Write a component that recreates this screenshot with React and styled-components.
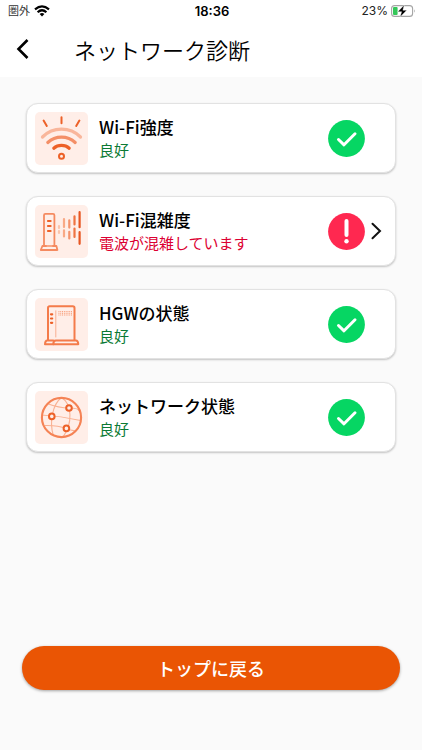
import React from "react";
import styled, { createGlobalStyle } from "styled-components";

const GlobalStyle = createGlobalStyle`
  * {
    box-sizing: border-box;
  }
  body {
    margin: 0;
    background-color: #fafafa;
    color: #000;
    font-family: "Noto Sans CJK JP", sans-serif;
  }
  h1, h2, p, ul {
    margin: 0;
    padding: 0;
  }
  svg {
    display: block;
  }
`;

const Screen = styled.div`
  display: flex;
  flex-direction: column;
  min-height: 100vh;
`;

const TopArea = styled.header`
  background-color: #fff;
`;

const StatusBar = styled.div`
  display: grid;
  grid-template-columns: 1fr auto 1fr;
  align-items: center;
  height: 22px;
  padding: 0 6px 0 8px;
  font-family: Inter, "Noto Sans CJK JP", sans-serif;
  font-size: 12px;
  line-height: 22px;
  .carrier {
    display: flex;
    align-items: center;
    gap: 4px;
    font-size: 11px;
    color: #333;
  }
  .clock {
    font-size: 13px;
    font-weight: 600;
  }
  .battery {
    display: flex;
    align-items: center;
    justify-content: flex-end;
    gap: 3px;
    color: #222;
  }
`;

const TitleBar = styled.div`
  display: flex;
  align-items: center;
  gap: 30px;
  height: 55px;
  padding: 0 0 2px 2px;
  h1 {
    font-size: 22px;
    font-weight: 350;
    line-height: 32px;
  }
`;

const BackButton = styled.button`
  display: flex;
  align-items: center;
  justify-content: center;
  width: 42px;
  height: 42px;
  padding: 0;
  border: none;
  background: none;
  cursor: pointer;
`;

const Content = styled.main`
  flex: 1;
  display: flex;
  flex-direction: column;
  justify-content: space-between;
  gap: 40px;
  padding: 26px 22px 60px;
`;

const CardList = styled.ul`
  display: flex;
  flex-direction: column;
  gap: 23px;
  padding: 0 4px;
  list-style: none;
`;

const Card = styled.li`
  display: flex;
  align-items: center;
  gap: 11px;
  min-height: 70px;
  padding: 0 12px 0 8px;
  border: 1px solid #e2e2e2;
  border-radius: 12px;
  background-color: #fff;
  box-shadow: 0 1px 2px rgba(0, 0, 0, 0.22);
`;

const IconTile = styled.div`
  flex-shrink: 0;
  width: 53px;
  height: 53px;
  border-radius: 5px;
  background-color: #ffeee8;
`;

const CardText = styled.div`
  flex: 1;
  h2 {
    font-size: 17px;
    font-weight: 500;
    line-height: 24px;
  }
  p {
    font-size: 15px;
    line-height: 22px;
    color: ${(props) => (props.$warning ? "#dc0032" : "#0b7a35")};
  }
`;

const CardStatus = styled.div`
  display: flex;
  align-items: center;
  gap: 6px;
  width: 55px;
`;

const DetailButton = styled.button`
  padding: 0;
  border: none;
  background: none;
  cursor: pointer;
`;

const TopButton = styled.button`
  width: 100%;
  height: 44px;
  border: none;
  border-radius: 22px;
  background-color: #ea5504;
  box-shadow: 0 1px 3px rgba(0, 0, 0, 0.35);
  color: #fff;
  font-family: inherit;
  font-size: 18px;
  font-weight: 500;
  line-height: 24px;
  cursor: pointer;
`;

const SignalIcon = () => (
  <svg width="16" height="12" viewBox="0 0 16 12" fill="none" stroke="#000" strokeWidth="2.2">
    <path d="M1 4.3Q8 -1.7 15 4.3" />
    <path d="M3.6 7.2Q8 3.3 12.4 7.2" />
    <path d="M8 11.5L5.6 9Q8 7.1 10.4 9Z" fill="#000" stroke="none" />
  </svg>
);

const BatteryIcon = () => (
  <svg width="25" height="12" viewBox="0 0 25 12" fill="none">
    <rect x="0.6" y="0.6" width="21" height="10.8" rx="3" stroke="#a5a5a5" strokeWidth="1.1" />
    <path d="M23.2 4.2Q24.8 6 23.2 7.8Z" fill="#a5a5a5" />
    <rect x="2" y="2" width="4.6" height="8" rx="1" fill="#34c759" />
    <path d="M13.2 0L6.8 6.7H10.6L9.1 12L15.8 5.2H11.9Z" fill="#000" stroke="#fff" strokeWidth="0.4" />
  </svg>
);

const BackIcon = () => (
  <svg width="14" height="22" viewBox="0 0 14 22" fill="none">
    <path d="M11.5 2L2.5 11L11.5 20" stroke="#000" strokeWidth="2.6" />
  </svg>
);

const CheckIcon = () => (
  <svg width="37" height="37" viewBox="0 0 37 37" fill="none" role="img" aria-label="OK">
    <circle cx="18.5" cy="18.5" r="18.4" fill="#06d663" />
    <path d="M10.5 19.5L16 24.8L27 13.8" stroke="#fff" strokeWidth="3" strokeLinecap="round" strokeLinejoin="round" />
  </svg>
);

const AlertIcon = () => (
  <svg width="37" height="37" viewBox="0 0 37 37" fill="none" role="img" aria-label="NG">
    <circle cx="18.5" cy="18.5" r="18.4" fill="#ff2850" />
    <path d="M18.5 8V22" stroke="#fff" strokeWidth="4" strokeLinecap="round" />
    <circle cx="18.5" cy="28.3" r="2.2" fill="#fff" />
  </svg>
);

const NextIcon = () => (
  <svg width="12" height="18" viewBox="0 0 12 18" fill="none">
    <path d="M1.5 1.7L9 9L1.5 16.3" stroke="#111" strokeWidth="2" strokeLinecap="round" />
  </svg>
);

// Wi-Fi強度
const StrengthIcon = () => (
  <svg viewBox="0 0 53 53" fill="none" stroke="#ed6128" strokeLinecap="round">
    <path d="M8.6 8.6L11.8 14M26.5 5.2V11.2M44.4 8.6L41.2 14" strokeWidth="2" />
    <path d="M7.5 25C18 14.6 35 14.6 45.5 25" stroke="#f9b69b" strokeWidth="3.2" />
    <path d="M12.8 30.5C20.5 23.4 32.5 23.4 40.2 30.5" stroke="#f48f67" strokeWidth="3.2" />
    <path d="M18.8 36.2C23 32.4 30 32.4 34.2 36.2" strokeWidth="3.2" />
    <circle cx="26.5" cy="44.3" r="2.5" strokeWidth="2" />
  </svg>
);

// Wi-Fi混雑度
const CongestionIcon = () => (
  <svg viewBox="0 0 53 53" fill="none" stroke="#f58a60" strokeWidth="1.8" strokeLinecap="round">
    <path d="M9 40.5V10.2Q9 8.8 10.4 8.8H18Q19.4 8.8 19.4 10.2V40.5" />
    <path d="M7.4 41H21.4L22.4 45H5.8Z" strokeLinejoin="round" />
    <path d="M12 41H17" stroke="#fbc5ad" strokeWidth="1" />
    <path d="M13 16H15.6M13 21H15.6M13 26H15.6" stroke="#ed6128" strokeWidth="2.2" />
    <path d="M24 21V23M24 26V28" stroke="#fbc5ad" strokeWidth="2.2" />
    <path d="M29 14V22M29 25.3V31.5" stroke="#f9a985" strokeWidth="2.2" />
    <path d="M34.3 15.3V22.6M34.3 26.8V33.5" stroke="#f4936d" strokeWidth="2.2" />
    <path d="M39.5 11.3V19.5M39.5 23.6V32" stroke="#ef7341" strokeWidth="2.2" />
    <path d="M44.6 7.2V22.2M44.6 27.2V38.8" stroke="#e75622" strokeWidth="2.2" />
  </svg>
);

// HGWの状態
const GatewayIcon = () => (
  <svg viewBox="0 0 53 53" fill="none" stroke="#f47b4a" strokeWidth="2" strokeLinecap="round" strokeLinejoin="round">
    <path d="M13 42V10Q13 8.3 14.7 8.3H37.8Q39.5 8.3 39.5 10V42" />
    <path d="M18.3 42.6H12.2Q10.2 42.6 10 46.2H18.3" />
    <path d="M20.8 42.6H41Q43 42.6 43.3 46.2H18.3Q18.3 42.6 20.8 42.6Z" />
    <path d="M20.8 12.8V39" strokeWidth="0.9" stroke="#f8a888" />
    <path d="M16 16.3H17.2M16 20.5H17.2M16 24.8H17.2" stroke="#ed6128" strokeWidth="2.2" />
    <path d="M23.5 13.6H37M23.5 15.3H37M23.5 17H37" strokeWidth="0.8" strokeLinecap="butt" strokeDasharray="0.9 0.9" />
  </svg>
);

// ネットワーク状態
const NetworkIcon = () => (
  <svg viewBox="0 0 53 53" fill="none" stroke="#f9b193" strokeWidth="1.1">
    <path d="M26.5 6.5C18 13 14 30 18.3 44.5M26.5 6.5C37 13 38 32 28 46" />
    <path d="M12 12.5Q24 17 34 17T44 20M6.5 24Q26 25 45.5 29.5M9.5 34.5Q22 34 31.5 37.5T41 39" />
    <circle cx="26.5" cy="26.5" r="19.6" stroke="#f58355" strokeWidth="2.1" />
    <g fill="#ffeee8" stroke="#ed6128" strokeWidth="2">
      <circle cx="34" cy="17" r="2.8" />
      <circle cx="16.8" cy="25.4" r="2.8" />
      <circle cx="31.4" cy="37.4" r="2.8" />
    </g>
  </svg>
);

const results = [
  { title: "Wi-Fi強度", message: "良好", icon: <StrengthIcon /> },
  { title: "Wi-Fi混雑度", message: "電波が混雑しています", icon: <CongestionIcon />, warning: true },
  { title: "HGWの状態", message: "良好", icon: <GatewayIcon /> },
  { title: "ネットワーク状態", message: "良好", icon: <NetworkIcon /> },
];

const ResultCard = ({ result }) => {
  return (
    <Card>
      <IconTile>{result.icon}</IconTile>
      <CardText $warning={result.warning}>
        <h2>{result.title}</h2>
        <p>{result.message}</p>
      </CardText>
      <CardStatus>
        {result.warning ? <AlertIcon /> : <CheckIcon />}
        {result.warning && (
          <DetailButton type="button" aria-label="詳細">
            <NextIcon />
          </DetailButton>
        )}
      </CardStatus>
    </Card>
  );
};

const App = () => {
  return (
    <>
      <GlobalStyle />
      <Screen>
        <TopArea>
          <StatusBar>
            <div className="carrier">
              <span>圏外</span>
              <SignalIcon />
            </div>
            <div className="clock">18:36</div>
            <div className="battery">
              <span>23%</span>
              <BatteryIcon />
            </div>
          </StatusBar>
          <TitleBar>
            <BackButton type="button" aria-label="戻る">
              <BackIcon />
            </BackButton>
            <h1>ネットワーク診断</h1>
          </TitleBar>
        </TopArea>
        <Content>
          <CardList>
            {results.map((result) => (
              <ResultCard key={result.title} result={result} />
            ))}
          </CardList>
          <TopButton type="button">トップに戻る</TopButton>
        </Content>
      </Screen>
    </>
  );
};

export default App;
